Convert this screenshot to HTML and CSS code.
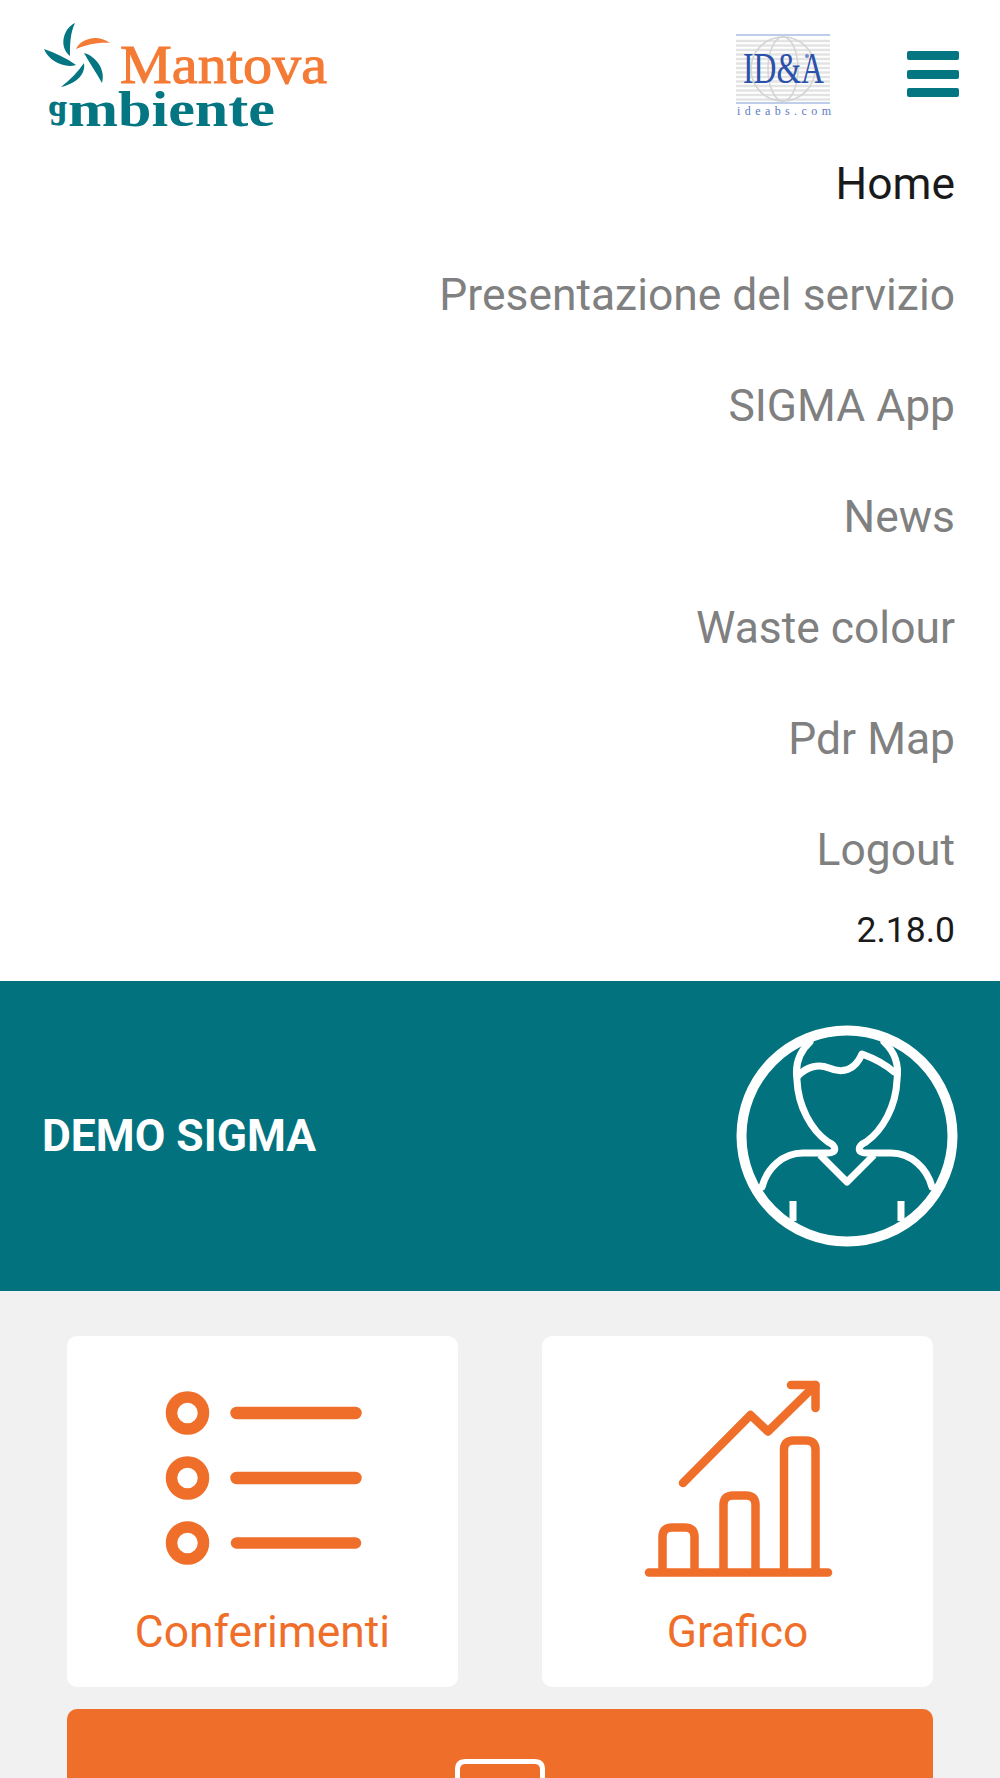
FILE: index.html
```html
<!DOCTYPE html>
<html lang="en">

<head>
  <meta charset="UTF-8">
  <meta name="viewport" content="width=device-width, initial-scale=1.0">
  <title>Mantova Ambiente</title>
  <link rel="stylesheet" href="styles.css">
</head>

<body>
  <div class="header">
    <svg class="brand" viewBox="0 0 290 120">
      <path fill="#f47b35" d="M32 29 C36 20 52 13 66 23 C54 22 42 25 32 29Z" />
      <g fill="#047682">
        <path d="M31 3 C20 8 14 26 26 36 C26 24 26 14 31 3Z" />
        <path d="M0 29 C4 40 20 49 32 45 C22 38 12 33 0 29Z" />
        <path d="M17 67 C30 64 42 56 40 43 C34 52 26 60 17 67Z" />
        <path d="M40 33 C52 36 62 50 58 63 C52 52 46 44 40 33Z" />
      </g>
      <text class="brand-top" x="76" y="63" textLength="207" lengthAdjust="spacingAndGlyphs">Mantova</text>
      <!-- the first letter of the logo is upside down -->
      <text class="brand-bottom" transform="translate(4 82) scale(0.75 -1)">a</text>
      <text class="brand-bottom" x="24" y="106" textLength="207" lengthAdjust="spacingAndGlyphs">mbiente</text>
    </svg>

    <svg class="partner" viewBox="0 0 96 84">
      <g fill="none" stroke="#e3e3e3">
        <path stroke-width="2.500"
          d="M0 7H94M0 11.500H94M0 16H94M0 20.500H94M0 25H94M0 29.500H94M0 34H94M0 38.500H94M0 43H94M0 47.500H94M0 52H94M0 56.500H94M0 61H94M0 65.500H94" />
        <g stroke="#d4d4d4" stroke-width="1.500">
          <circle cx="47" cy="35" r="32" />
          <ellipse cx="47" cy="35" rx="15" ry="32" />
        </g>
      </g>
      <path fill="none" stroke="#a9bde4" stroke-width="1.500" d="M0 1H94M0 69H94" />
      <text class="partner-name" x="7" y="49" textLength="81" lengthAdjust="spacingAndGlyphs">ID&amp;A</text>
      <circle cx="71" cy="22" r="2" fill="#6f8bcb" />
      <text class="partner-url" x="1" y="81" textLength="94">ideabs.com</text>
    </svg>

    <button class="menu-button">
      <span></span>
      <span></span>
      <span></span>
    </button>
  </div>

  <ul class="menu">
    <li class="menu-item active">Home</li>
    <li class="menu-item">Presentazione del servizio</li>
    <li class="menu-item">SIGMA App</li>
    <li class="menu-item">News</li>
    <li class="menu-item">Waste colour</li>
    <li class="menu-item">Pdr Map</li>
    <li class="menu-item">Logout</li>
  </ul>
  <div class="version">2.18.0</div>

  <div class="user-bar">
    <div class="user-name">DEMO SIGMA</div>
    <svg class="user-icon" viewBox="0 0 224 224" fill="none" stroke="#fff" stroke-linejoin="round" stroke-linecap="round">
      <circle cx="112" cy="112" r="105.500" stroke-width="10" />
      <path stroke-width="7"
        d="M75 18 C64 28 60 42 62 56 C63 82 76 106 93 118 C102 122 102 129 93 129 L68 129 C48 129 32 144 27 163" />
      <path stroke-width="7"
        d="M149 18 C160 28 164 42 162 56 C161 82 148 106 131 118 C122 122 122 129 131 129 L156 129 C176 129 192 144 197 163" />
      <path stroke-width="7" d="M63 52 C72 42 84 40 94 44 C108 50 120 46 127 30 C138 34 150 40 159 48" />
      <path stroke-width="7" stroke-linecap="butt" d="M85 131 L112 158 L139 131" />
      <path stroke-width="7" stroke-linecap="butt" d="M58 177V197M166 177V197" />
    </svg>
  </div>

  <div class="content">
    <div class="tile-row">
      <div class="tile">
        <svg class="tile-icon" viewBox="0 0 198 198" fill="none" stroke="#ef6f2a">
          <circle cx="23.500" cy="33" r="16" stroke-width="11.500" />
          <circle cx="23.500" cy="98" r="16" stroke-width="11.500" />
          <circle cx="23.500" cy="163" r="16" stroke-width="11.500" />
          <path stroke-width="12.500" stroke-linecap="round" d="M72.500 33H191.500M72.500 98H191.500" />
          <path stroke-width="11.500" stroke-linecap="round" d="M72.500 163H191.500" />
        </svg>
        <div class="tile-label">Conferimenti</div>
      </div>
      <div class="tile">
        <svg class="tile-icon" viewBox="0 0 198 198" fill="none" stroke="#ef6f2a" stroke-linecap="round" stroke-linejoin="round" stroke-width="8.500">
          <path d="M44 103 L111.500 35 L129 51.500 L176.500 5" />
          <path d="M152 5H176.500V28" />
          <path d="M10 192.500H189" />
          <path d="M23.500 190V157Q23.500 147.500 33 147.500H46Q55.500 147.500 55.500 157V190" />
          <path d="M84.500 190V125Q84.500 115.500 94 115.500H107Q116.500 115.500 116.500 125V190" />
          <path d="M145 190V70Q145 60.500 154.500 60.500H167Q176.500 60.500 176.500 70V190" />
        </svg>
        <div class="tile-label">Grafico</div>
      </div>
    </div>
    <div class="wide-tile">
      <svg class="wide-icon" viewBox="0 0 90 19" fill="none" stroke="#fff" stroke-width="5">
        <path d="M2.500 19V10.500Q2.500 2.500 10.500 2.500H79.500Q87.500 2.500 87.500 10.500V19" />
      </svg>
    </div>
  </div>
</body>

</html>
```

FILE: styles.css
```css
body {
  font-family: Roboto, Arial, sans-serif;
  margin: 0;
  padding: 0;
  background-color: #f1f1f1;
}

.header {
  background-color: white;
  height: 140px;
  display: flex;
  align-items: flex-start;
  padding: 0 41px 0 44px;
}

.brand {
  display: block;
  width: 290px;
  height: 120px;
  margin-top: 20px;
  overflow: visible;
}

.brand-top {
  font-family: "Liberation Serif", serif;
  font-size: 54px;
  fill: #f47b35;
  stroke: #f47b35;
  stroke-width: 1px;
}

.brand-bottom {
  font-family: "Liberation Serif", serif;
  font-size: 51px;
  font-weight: bold;
  fill: #047682;
}

.partner {
  display: block;
  width: 96px;
  height: 84px;
  margin: 34px 0 0 auto;
  overflow: visible;
}

.partner-name {
  font-family: "Liberation Serif", serif;
  font-size: 45px;
  fill: #2a52ab;
}

.partner-url {
  font-family: "Liberation Serif", serif;
  font-size: 12px;
  fill: #5d7cc4;
}

.menu-button {
  width: 52px;
  height: 46px;
  margin: 51px 0 0 75px;
  padding: 0;
  border: none;
  background: none;
  display: flex;
  flex-direction: column;
  justify-content: space-between;
}

.menu-button span {
  display: block;
  height: 9px;
  border-radius: 2px;
  background-color: #047682;
}

.menu {
  list-style: none;
  margin: 0;
  padding: 1px 45px 0 0;
  background-color: white;
}

.menu-item {
  height: 86px;
  margin-bottom: 25px;
  line-height: 86px;
  font-size: 44.400px;
  text-align: right;
  color: #808080;
}

.menu-item:last-child {
  margin-bottom: 0;
}

.menu-item.active {
  color: #1a1a1a;
}

.version {
  background-color: white;
  height: 88px;
  padding-right: 45px;
  line-height: 75px;
  font-size: 35.500px;
  text-align: right;
  color: #1a1a1a;
}

.user-bar {
  background-color: #02727e;
  height: 310px;
  display: flex;
  justify-content: space-between;
  align-items: center;
  padding: 0 41px 0 42px;
}

.user-name {
  color: white;
  font-size: 44.400px;
  font-weight: bold;
}

.user-icon {
  width: 224px;
  height: 224px;
}

.content {
  padding: 45px 67px 0;
}

.tile-row {
  display: flex;
  justify-content: space-between;
}

.tile {
  width: 391px;
  height: 351px;
  box-sizing: border-box;
  padding-top: 44px;
  background-color: white;
  border-radius: 10px;
  text-align: center;
}

.tile-icon {
  display: block;
  width: 198px;
  height: 198px;
  margin: 0 auto;
}

.tile-label {
  margin-top: 29px;
  font-size: 44.400px;
  line-height: 50px;
  color: #ef6f2a;
}

.wide-tile {
  height: 69px;
  box-sizing: border-box;
  margin-top: 22px;
  padding-top: 50px;
  background-color: #ef6f2a;
  border-radius: 10px 10px 0 0;
}

.wide-icon {
  display: block;
  width: 90px;
  height: 19px;
  margin: 0 auto;
}
```
